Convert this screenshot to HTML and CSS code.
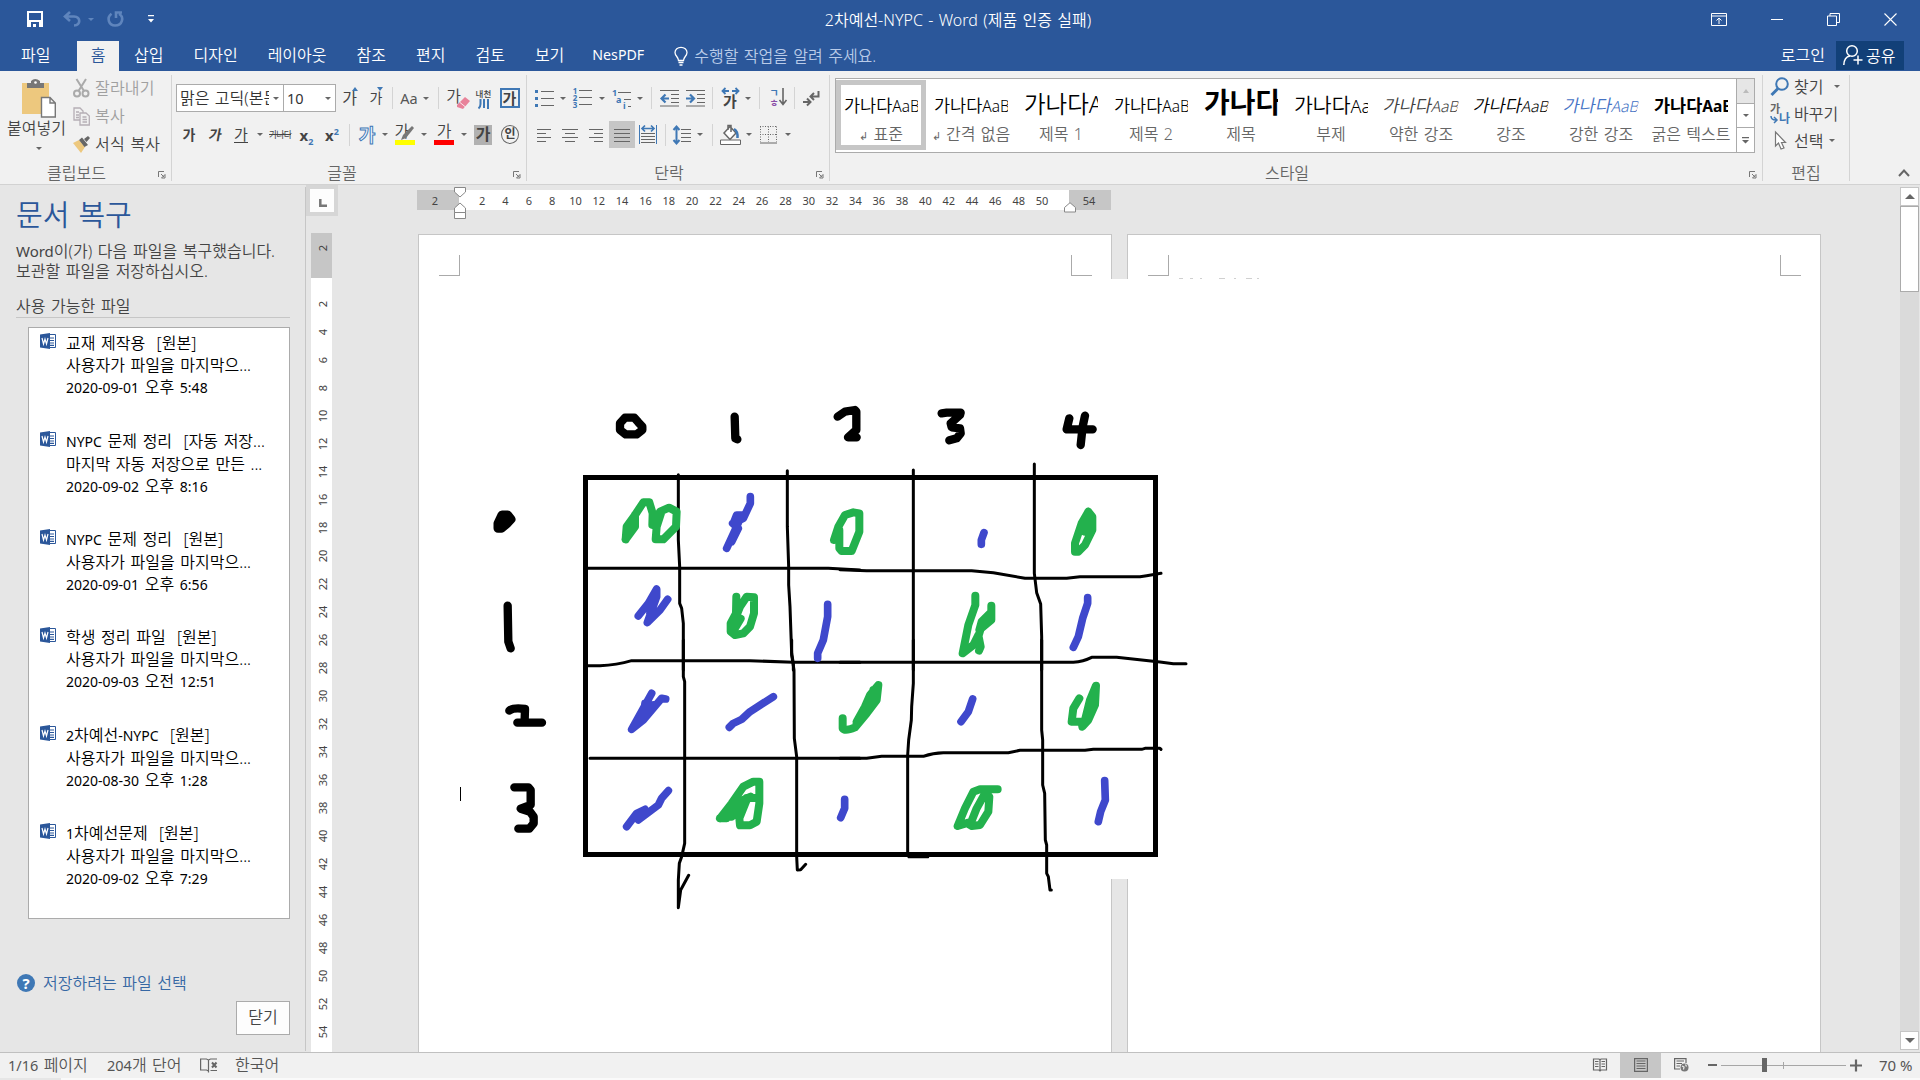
FILE: index.html
```
<!DOCTYPE html>
<html lang="ko">
<head>
<meta charset="utf-8">
<title>2차예선-NYPC - Word</title>
<link rel="stylesheet" href="styles.css">
</head>
<body>
<header class="titlebar">
  <div class="qat">
    <svg width="16" height="16" viewBox="0 0 16 16"><path fill="#fff" fill-rule="evenodd" d="M0 0H16V16H0ZM2 2V9H14V2ZM4 11V16H6V13H9V16H12V11Z"/></svg>
    <svg width="18" height="16" viewBox="0 0 18 16" fill="none" stroke="#5f85bd" stroke-width="2.6"><path d="M7 1L2 5.5L7 10M2 5.5H11C18 6 18 14 11 14.5"/></svg>
    <i class="ar faint"></i>
    <svg width="17" height="16" viewBox="0 0 17 16" fill="none" stroke="#5f85bd" stroke-width="2.6"><path d="M4.500 2.800C-1 7 2 14.500 8 14.500C15.500 14.500 17.500 6 12 2.800M9 7V1.500H15"/></svg>
    <svg class="cust" width="6" height="8" viewBox="0 0 6 8"><path fill="#fff" d="M0 0H6V1.300H0ZM0 4H6L3 7.500Z"/></svg>
  </div>
  <div class="doc-title">2차예선-NYPC - Word (제품 인증 실패)</div>
  <div class="winbtns">
    <svg width="16" height="13" viewBox="0 0 16 13" fill="none" stroke="#fff"><path d="M.5.5H15.500V12.500H.5ZM.5 3H15.500M8 11V5M5.500 7.500L8 5L10.500 7.500"/></svg>
    <svg width="12" height="13" viewBox="0 0 12 13" stroke="#fff"><path d="M0 6.500H12"/></svg>
    <svg width="13" height="13" viewBox="0 0 13 13" fill="none" stroke="#fff"><path d="M.5 3H9.500V12.500H.5ZM3 3V.5H12.500V9.500H9.500"/></svg>
    <svg width="13" height="13" viewBox="0 0 13 13" stroke="#fff" stroke-width="1.1"><path d="M.5.5L12.500 12.500M12.500.5L.5 12.500"/></svg>
  </div>
</header>
<nav class="tabs">
  <span class="file">파일</span><span class="on">홈</span><span>삽입</span><span>디자인</span><span>레이아웃</span><span>참조</span><span>편지</span><span>검토</span><span>보기</span><span class="nes">NesPDF</span>
  <div class="tell">
    <svg width="14" height="19" viewBox="0 0 14 19" fill="none" stroke="#fff" stroke-width="1.300"><path d="M4.500 13.500C4.500 10 1 9 1 5.500A5.800 5 0 0 1 13 5.500C13 9 9.500 10 9.500 13.500ZM4.500 15.500H9.500M5.500 18H8.500"/></svg>
    <em>수행할 작업을 알려 주세요.</em>
  </div>
  <b class="login">로그인</b>
  <div class="share">
    <svg width="20" height="20" viewBox="0 0 20 20" fill="none" stroke="#fff" stroke-width="1.500"><circle cx="9" cy="6" r="5.300"/><path d="M.8 20C1 14 4 11.500 7 11M15 10.500V19.500M10.500 15H19.500"/></svg>
    <em>공유</em>
  </div>
</nav>

<section class="ribbon">
  <div class="group clip">
    <div class="clip-body">
      <div class="paste">
        <svg width="34" height="39" viewBox="0 0 34 39"><path fill="#edc87e" d="M0 4H27V35H0Z"/><path fill="#777" d="M5 4H9V2Q13-2 18 2V4H22V9H5Z"/><circle cx="13.500" cy="3.500" r="1.300" fill="#fff"/><path fill="#fff" stroke="#777" stroke-width="1.400" d="M19.500 18.500H28L33.300 24V38H19.500ZM28 18.500V24H33.300"/></svg>
        <span>붙여넣기</span>
        <i class="ar"></i>
      </div>
      <div class="clip-list">
        <div class="dis"><svg width="17" height="19" viewBox="0 0 17 19" fill="none" stroke="#aaa" stroke-width="2"><path d="M3.500 0L11 12M13 0L5.500 12"/><circle cx="4" cy="14.500" r="3"/><circle cx="12.500" cy="14.500" r="3"/></svg>잘라내기</div>
        <div class="dis"><svg width="17" height="19" viewBox="0 0 17 19" fill="#f1f1f1" stroke="#b5aeb5" stroke-width="1.300"><path d="M1 1H7L10 4V13H1ZM3 5H6M3 8H6M3 10.500H6"/><path d="M7 6H13L16.300 9V18H7ZM9.500 10H13.500M9.500 12.500H14M9.500 15H14"/></svg>복사</div>
        <div><svg width="17" height="17" viewBox="0 0 17 17"><path fill="#edc87e" d="M0 7L6 4L12 11L8 17Z"/><path fill="#666" d="M6 4L9 1.500L15 9L11.500 11ZM11 3L15 0L17 2L13.500 6Z"/></svg>서식 복사</div>
      </div>
    </div>
    <div class="cap"><span>클립보드</span><svg class="launch" viewBox="0 0 8 8"><path d="M.5 6V.5H6M3 3L6 6M7 3.500V7H3.500Z"/></svg></div>
  </div>

  <div class="group fontg">
    <div class="row f1">
      <div class="combo"><span>맑은 고딕(본문</span><i class="ar"></i></div>
      <div class="combo num"><span>10</span><i class="ar"></i></div>
      <span class="grow">가<svg width="6" height="4"><path fill="#3f78b5" d="M0 4L3 0L6 4Z"/></svg></span>
      <span class="grow sm">가<svg width="6" height="4"><path fill="#3f78b5" d="M0 0L3 4L6 0Z"/></svg></span>
      <i class="sep"></i>
      <span class="aa">Aa<i class="ar"></i></span>
      <i class="sep"></i>
      <span class="clear">가<svg width="13" height="12" viewBox="0 0 13 12"><path fill="#e8829a" d="M8 0L13 4L6 12L0 10V8Z"/><path stroke="#fff" stroke-width=".8" d="M3 5.500L8.500 10"/></svg></span>
      <span class="ruby"><small>내천</small><svg width="11" height="10" fill="none" stroke="#3f78b5" stroke-width="2"><path d="M2.500 0V5Q2.500 8 .5 9.500M6 0V9M10 0V10"/></svg></span>
      <span class="boxed">가</span>
    </div>
    <div class="row f2">
      <span class="g bold">가</span><span class="g bold it">가</span><span class="g und">가</span><i class="ar"></i>
      <span class="strike">가나다</span>
      <span class="x">x<sub>2</sub></span><span class="x">x<sup>2</sup></span><i class="sep"></i>
      <span class="glow">가</span><i class="ar"></i>
      <span class="mark"><span>가</span><svg width="14" height="14" viewBox="0 0 14 14"><path fill="#777" d="M12 0L14 2L6 12L1 14L3 9Z"/></svg></span><i class="ar"></i>
      <span class="mark red"><span>가</span></span><i class="ar"></i>
      <span class="shaded">가</span><span class="circled">인</span>
    </div>
    <div class="cap"><span>글꼴</span><svg class="launch" viewBox="0 0 8 8"><path d="M.5 6V.5H6M3 3L6 6M7 3.500V7H3.500Z"/></svg></div>
  </div>

  <div class="group parag">
    <div class="row p1">
      <svg width="19" height="18" class="ln"><path d="M6 2.500H19M6 9.500H19M6 16.500H19"/><path class="bl" d="M0 2.500H3M0 9.500H3M0 16.500H3" stroke-width="3"/></svg><i class="ar"></i>
      <span class="nums"><small>1<br>2<br>3</small><svg width="13" height="18" class="ln"><path d="M0 2.500H13M0 9.500H13M0 16.500H13"/></svg></span><i class="ar"></i>
      <svg width="19" height="19" class="ln"><path d="M6 3.500H19M12 10.500H19M16 17.500H19"/><text x="0" y="7">1</text><text x="4" y="14">a</text><text x="11" y="20">i</text></svg><i class="ar"></i><i class="sep"></i>
      <svg width="19" height="18" class="ln"><path d="M0 1.500H19M11 5.500H19M11 9.500H19M11 13.500H19M0 17H19"/><path class="bl" stroke-width="2.200" d="M9 9.500H2M5.500 5.500L1.500 9.500L5.500 13.500"/></svg>
      <svg width="19" height="18" class="ln"><path d="M0 1.500H19M11 5.500H19M11 9.500H19M11 13.500H19M0 17H19"/><path class="bl" stroke-width="2.200" d="M0 9.500H7M4 5.500L8 9.500L4 13.500"/></svg><i class="sep"></i>
      <span class="asian"><svg width="19" height="8" class="ln"><path class="bl" stroke-width="1.800" d="M8 4H1M4.500 1L1.500 4L4.500 7M11 4H18M14.500 1L17.500 4L14.500 7"/></svg>가</span><i class="ar"></i><i class="sep"></i>
      <span class="sort"><small>ㄱ<br><u>ㅎ</u></small><svg width="8" height="18" class="ln"><path stroke-width="1.600" d="M4 0V16M.5 12L4 16.500L7.500 12"/></svg></span><i class="sep"></i>
      <svg width="17" height="15" class="ln"><path stroke-width="2" d="M15.500 0V5.500H8M11 2L7.500 5.500L11 9M0 11H7M4 7.500L7.500 11L4 14.500"/></svg>
    </div>
    <div class="row p2">
      <svg width="14" height="14" class="ln"><path d="M0 1.500H14M0 5.500H9M0 9.500H14M0 13.500H9"/></svg>
      <svg width="16" height="14" class="ln"><path d="M0 1.500H16M3 5.500H13M0 9.500H16M3 13.500H13"/></svg>
      <svg width="14" height="14" class="ln"><path d="M0 1.500H14M5 5.500H14M0 9.500H14M5 13.500H14"/></svg>
      <span class="sel"><svg width="16" height="14" class="ln"><path d="M0 1.500H16M0 5.500H16M0 9.500H16M0 13.500H16"/></svg></span>
      <svg width="18" height="19" class="ln"><path d="M2 8.500H16M2 11.500H16M2 14.500H16M2 17.500H16"/><path class="bl" d="M.5 0V19M17.500 0V19"/><path class="bl" stroke-width="1.700" d="M3 3.500H15M6 .5L3 3.500L6 6.500M12 .5L15 3.500L12 6.500"/></svg><i class="sep"></i>
      <svg width="18" height="20" class="ln"><path d="M8 4.500H18M8 8.500H18M8 12.500H18M8 16.500H18"/><path class="bl" stroke-width="2" d="M3.500 1V19M.5 5L3.500 1.500L6.500 5M.5 15L3.500 18.500L6.500 15"/></svg><i class="ar"></i><i class="sep"></i>
      <svg width="21" height="21" class="ln"><path d="M4 9L10 2.500L16 9L10 15.500ZM8 6V1.500H11V8" fill="#fff" stroke-width="1.500"/><path class="bl" stroke-width="2.500" d="M14 5Q18 7 17.500 14"/><path fill="#fff" d="M.5 16H20.500V20.500H.5Z"/></svg><i class="ar"></i>
      <svg width="17" height="18" class="ln"><path stroke-dasharray="1 1.500" d="M.5.5V16M8.500.5V16M16.500.5V16M0 .5H17M0 8.500H17"/><path d="M0 17H17"/></svg><i class="ar"></i>
    </div>
    <div class="cap"><span>단락</span><svg class="launch" viewBox="0 0 8 8"><path d="M.5 6V.5H6M3 3L6 6M7 3.500V7H3.500Z"/></svg></div>
  </div>

  <div class="group styles">
    <div class="gallery">
      <div class="st on"><p>가나다<tt>AaB</tt></p><span><small>↲</small> 표준</span></div>
      <div class="st"><p>가나다<tt>AaB</tt></p><span><small>↲</small> 간격 없음</span></div>
      <div class="st"><p class="h1">가나다A</p><span>제목 1</span></div>
      <div class="st"><p>가나다<tt>AaB</tt></p><span>제목 2</span></div>
      <div class="st"><p class="ti">가나다</p><span>제목</span></div>
      <div class="st"><p class="su">가나다<tt>Aa</tt></p><span>부제</span></div>
      <div class="st"><p class="em gr">가나다<tt>AaB</tt></p><span>약한 강조</span></div>
      <div class="st"><p class="em">가나다<tt>AaB</tt></p><span>강조</span></div>
      <div class="st"><p class="em blu">가나다<tt>AaB</tt></p><span>강한 강조</span></div>
      <div class="st"><p class="bo">가나다<tt>AaB</tt></p><span>굵은 텍스트</span></div>
      <div class="gscroll"><div class="off"><i class="ar up"></i></div><div><i class="ar"></i></div><div><svg width="7" height="7"><path fill="#666" d="M0 0H7V1.200H0ZM0 3H7L3.500 6.500Z"/></svg></div></div>
    </div>
    <div class="cap"><span>스타일</span><svg class="launch" viewBox="0 0 8 8"><path d="M.5 6V.5H6M3 3L6 6M7 3.500V7H3.500Z"/></svg></div>
  </div>

  <div class="group edit">
    <div class="edit-list">
      <div><svg width="20" height="19" viewBox="0 0 20 19" fill="none" stroke="#3f78b5"><circle cx="12" cy="7" r="5.800" stroke-width="2"/><path stroke-width="3" d="M8 11.500L1.500 18"/></svg>찾기<i class="ar far"></i></div>
      <div><svg width="20" height="20" viewBox="0 0 20 20"><text x="0" y="9" class="t1">가</text><text x="9" y="19" class="t2">나</text><path fill="none" stroke="#3f78b5" stroke-width="1.500" d="M1 12Q1 16 6 16M4 13L7 16L4 19"/></svg>바꾸기</div>
      <div><svg width="20" height="19" viewBox="0 0 20 19"><path fill="#fff" stroke="#777" stroke-width="1.200" d="M5.500 1V15L8.500 12L11 18L14 17L11.500 11.500H15.500Z"/></svg>선택<i class="ar"></i></div>
    </div>
    <div class="cap"><span>편집</span></div>
  </div>
  <svg class="collapse" width="12" height="9" fill="none" stroke="#666" stroke-width="2"><path d="M1 8L6 2.500L11 8"/></svg>
</section>

<main class="main">
  <aside class="pane">
    <h1>문서 복구</h1>
    <p class="msg"><span class="lat">Word</span>이(가) 다음 파일을 복구했습니다.<br>보관할 파일을 저장하십시오.</p>
    <h2>사용 가능한 파일</h2>
    <ul class="files">
      <li><svg class="wd" viewBox="0 0 16 16"><path fill="#fff" stroke="#2b579a" d="M8 1.500H15.500V14.500H8Z"/><path stroke="#2b579a" stroke-width="1.200" d="M9 5H14M9 7.500H14M9 10H14M9 12.300H14"/><path fill="#2b579a" d="M0 1.500L10 0V16L0 14.500Z"/><path fill="none" stroke="#fff" stroke-width="1.200" d="M2 5L3.500 11L5 6L6.500 11L8 5"/></svg><div>교재 제작용 &nbsp;[원본]<br>사용자가 파일을 마지막으...<br><span class="lat">2020-09-01</span> 오후 <span class="lat">5:48</span></div></li>
      <li><svg class="wd" viewBox="0 0 16 16"><path fill="#fff" stroke="#2b579a" d="M8 1.500H15.500V14.500H8Z"/><path stroke="#2b579a" stroke-width="1.200" d="M9 5H14M9 7.500H14M9 10H14M9 12.300H14"/><path fill="#2b579a" d="M0 1.500L10 0V16L0 14.500Z"/><path fill="none" stroke="#fff" stroke-width="1.200" d="M2 5L3.500 11L5 6L6.500 11L8 5"/></svg><div><span class="lat">NYPC</span> 문제 정리 &nbsp;[자동 저장...<br>마지막 자동 저장으로 만든 ...<br><span class="lat">2020-09-02</span> 오후 <span class="lat">8:16</span></div></li>
      <li><svg class="wd" viewBox="0 0 16 16"><path fill="#fff" stroke="#2b579a" d="M8 1.500H15.500V14.500H8Z"/><path stroke="#2b579a" stroke-width="1.200" d="M9 5H14M9 7.500H14M9 10H14M9 12.300H14"/><path fill="#2b579a" d="M0 1.500L10 0V16L0 14.500Z"/><path fill="none" stroke="#fff" stroke-width="1.200" d="M2 5L3.500 11L5 6L6.500 11L8 5"/></svg><div><span class="lat">NYPC</span> 문제 정리 &nbsp;[원본]<br>사용자가 파일을 마지막으...<br><span class="lat">2020-09-01</span> 오후 <span class="lat">6:56</span></div></li>
      <li><svg class="wd" viewBox="0 0 16 16"><path fill="#fff" stroke="#2b579a" d="M8 1.500H15.500V14.500H8Z"/><path stroke="#2b579a" stroke-width="1.200" d="M9 5H14M9 7.500H14M9 10H14M9 12.300H14"/><path fill="#2b579a" d="M0 1.500L10 0V16L0 14.500Z"/><path fill="none" stroke="#fff" stroke-width="1.200" d="M2 5L3.500 11L5 6L6.500 11L8 5"/></svg><div>학생 정리 파일 &nbsp;[원본]<br>사용자가 파일을 마지막으...<br><span class="lat">2020-09-03</span> 오전 <span class="lat">12:51</span></div></li>
      <li><svg class="wd" viewBox="0 0 16 16"><path fill="#fff" stroke="#2b579a" d="M8 1.500H15.500V14.500H8Z"/><path stroke="#2b579a" stroke-width="1.200" d="M9 5H14M9 7.500H14M9 10H14M9 12.300H14"/><path fill="#2b579a" d="M0 1.500L10 0V16L0 14.500Z"/><path fill="none" stroke="#fff" stroke-width="1.200" d="M2 5L3.500 11L5 6L6.500 11L8 5"/></svg><div><span class="lat">2</span>차예선<span class="lat">-NYPC</span> &nbsp;[원본]<br>사용자가 파일을 마지막으...<br><span class="lat">2020-08-30</span> 오후 <span class="lat">1:28</span></div></li>
      <li><svg class="wd" viewBox="0 0 16 16"><path fill="#fff" stroke="#2b579a" d="M8 1.500H15.500V14.500H8Z"/><path stroke="#2b579a" stroke-width="1.200" d="M9 5H14M9 7.500H14M9 10H14M9 12.300H14"/><path fill="#2b579a" d="M0 1.500L10 0V16L0 14.500Z"/><path fill="none" stroke="#fff" stroke-width="1.200" d="M2 5L3.500 11L5 6L6.500 11L8 5"/></svg><div><span class="lat">1</span>차예선문제 &nbsp;[원본]<br>사용자가 파일을 마지막으...<br><span class="lat">2020-09-02</span> 오후 <span class="lat">7:29</span></div></li>
    </ul>
    <div class="help"><i>?</i>저장하려는 파일 선택</div>
    <button class="close">닫기</button>
  </aside>

  <div class="vcol">
    <div class="corner"><div><svg width="8" height="8" fill="none" stroke="#777" stroke-width="2.500"><path d="M1.300 0V6.700H8"/></svg></div></div>
    <div class="vruler"><div class="dark"><span>2</span></div>
      <div class="nums-v"><span>2</span><span>4</span><span>6</span><span>8</span><span>10</span><span>12</span><span>14</span><span>16</span><span>18</span><span>20</span><span>22</span><span>24</span><span>26</span><span>28</span><span>30</span><span>32</span><span>34</span><span>36</span><span>38</span><span>40</span><span>42</span><span>44</span><span>46</span><span>48</span><span>50</span><span>52</span><span>54</span></div>
    </div>
  </div>

  <div class="doc">
    <div class="hruler">
      <div class="dark a">2</div>
      <div class="nums-h"><span>2</span><span>4</span><span>6</span><span>8</span><span>10</span><span>12</span><span>14</span><span>16</span><span>18</span><span>20</span><span>22</span><span>24</span><span>26</span><span>28</span><span>30</span><span>32</span><span>34</span><span>36</span><span>38</span><span>40</span><span>42</span><span>44</span><span>46</span><span>48</span><span>50</span></div>
      <div class="dark b">54</div>
      <svg class="ind left" width="12" height="32" fill="#fff" stroke="#888"><path d="M.5.5H11.500V5L6 10L.5 5ZM.5 25.500V21L6 16L11.500 21V25.500ZM.5 25.500H11.500V31.500H.5Z"/></svg>
      <svg class="ind right" width="12" height="11" fill="#fff" stroke="#888"><path d="M.5 10V5.500L6 .7L11.500 5.500V10Z"/></svg>
    </div>
    <div class="pages">
      <article class="page"><i class="cm l"></i><i class="cm r"></i></article>
      <article class="page"><i class="cm l"></i><i class="cm r"></i></article>
      <svg class="drawing" width="782" height="601" viewBox="460 279 782 601" fill="none" stroke-linecap="round" stroke-linejoin="round">
        <path fill="#fff" d="M1100 279H1242V879H1100Z"/>
        <path stroke="#d0d0d0" stroke-linecap="butt" d="M1179 278.500H1183M1190 278.500H1193M1200 278.500H1202M1219 278.500H1225M1234 278.500H1236M1246 278.500H1252M1257 278.500H1259"/>
        <path stroke="#000" stroke-width="5" stroke-linejoin="miter" d="M585.500 477.500H1155.500V854.500H585.500Z"/>
        <path stroke="#000" d="M460.500 787V801" stroke-linecap="butt"/>
        <g transform="translate(460 380) scale(.33333)">
          <path stroke="#000" stroke-width="9" d="M655 284V480L659 560V670L665 685L670 730V870M982 272V440L986 560V615L990 680L995 820L1000 850V870M380 565H1105L1200 570M380 857H420Q470 855 515 842H870L1000 847H1200"/>
          <path stroke="#000" stroke-width="25" d="M495 113H523L535 127L547 140V150L530 163H497L480 150V130ZM824 110L826 175L832 178M143 677L145 785L152 805"/>
          <path stroke="#000" stroke-width="27" d="M126 405H143L153 418L142 430L124 445H114V430Z"/>
          <path stroke="#23b14d" stroke-width="24" d="M497 478L500 440L525 405L550 367H568L578 400L577 435L600 395L627 383L650 395L648 440L610 478H587L590 440L603 400M497 478L525 440V405M505 440L515 450M829 650L828 700L812 730V755L825 765L850 760L870 740L882 700V652L860 650L840 680L828 710L842 716L825 745"/>
          <path stroke="#3f48cc" stroke-width="23" d="M871 350V370L850 415L820 430L830 405L845 405L830 440L800 505M818 430L835 445L815 485M535 708L565 670L590 627V650L562 728L600 690L623 658M580 670L570 700M1103 673V710L1090 780L1073 820V835"/>
        </g>
        <g transform="translate(840 380) scale(.33333)">
          <path stroke="#000" stroke-width="9" d="M220 270V870M583 252V580L590 638L602 672L605 770V870M0 569L80 572H395L460 578L555 595H680L720 590H900L920 587L963 580M0 847H700Q730 845 755 832H830L960 846L1000 851H1038"/>
          <path stroke="#000" stroke-width="25" d="M-7 110L15 95L45 90L49 95V150L24 172H50M305 100L320 98H362L360 105L332 130L335 142L360 145L362 160L350 175L328 181M688 115L680 148H758M735 107L728 140L722 195"/>
          <path stroke="#23b14d" stroke-width="24" d="M-18 480L-5 440L15 405L40 397L58 400V455L35 513H5L-2 505V450M-8 450V475M745 395L757 410V450L735 495L715 515H705V490L725 430L745 395M745 400L738 455L750 440M735 430V455M406 647V675L385 735L368 820L400 795L415 765L422 800L417 812M454 677V720L418 750L425 725L450 700M424 740L415 770M430 725H445"/>
          <path stroke="#3f48cc" stroke-width="23" d="M432 458L424 480V493M743 653V670L728 715L715 770L700 802"/>
        </g>
        <g transform="translate(460 640) scale(.33333)">
          <path stroke="#000" stroke-width="9" d="M670 0V110L674 125V610L665 650L658 670L655 720V803L662 750L686 706M995 0V45L1002 90L1003 295L1010 350V650L1012 690L1022 689L1037 673M390 355H1200"/>
          <path stroke="#000" stroke-width="25" d="M148 212Q160 202 195 207L194 240M172 248H246M163 442H205L212 450V495L182 506L210 515L221 530V550L208 566H175"/>
          <path stroke="#23b14d" stroke-width="24" d="M780 535L815 490L850 440L880 425L898 425V490L890 545L870 556H840L838 535L860 480L872 470L850 480L815 505L800 535L780 535M850 500L815 530H795M860 474H885"/>
          <path stroke="#3f48cc" stroke-width="23" d="M575 160L515 268L550 240L605 175L617 177M565 190L530 250M555 190L550 225L580 195M808 262L820 250L845 238L870 215L940 170M500 560L530 520L555 508L535 540L595 495L605 475L625 452M525 530L545 528M1154 478V505L1142 533"/>
        </g>
        <g transform="translate(840 640) scale(.33333)">
          <path stroke="#000" stroke-width="9" d="M220 0V130L215 200L214 240L206 300L203 345V645M605 0V270L608 300V435L614 460L616 600L620 615V700L625 710L630 750H634M0 355H80L125 349H250Q280 338 310 338H505L540 331H735L760 328H905L915 325H960L963 328"/>
          <path stroke="#000" stroke-width="5" d="M205 652H265"/>
          <path stroke="#23b14d" stroke-width="24" d="M8 235V265Q15 275 45 262L80 220L110 180L115 135L90 165L75 200L50 245M100 150L95 200L75 215M65 225L50 250M90 175L80 210M718 175L700 205L695 245H725L727 260L745 240L765 195L768 137L750 180L735 240M765 150L755 210M473 448H420L400 455L375 505L353 558L385 548L395 558L420 555L445 515L448 470L435 460L410 505L390 555"/>
          <path stroke="#3f48cc" stroke-width="23" d="M398 177L385 215L363 245M794 422L796 480L782 515L775 545"/>
        </g>
      </svg>
    </div>
  </div>

  <div class="vscroll"><div class="sb"><i class="ar up"></i></div><div class="thumb"></div><div class="sb down"><i class="ar"></i></div></div>
</main>

<footer class="status">
  <span class="s1"><span class="lat">1/16</span> 페이지</span><span class="s2"><span class="lat">204</span>개 단어</span>
  <svg class="book" width="18" height="15" fill="none" stroke="#666" stroke-width="1.200"><path d="M8.500 13L6.500 12H.6V1H6.500L8.500 2V14.500M8.500 2L10.500 1H17M10.500 12.500H17" /><path stroke-width="2" d="M12 4.500L16.500 9.500M16.500 4.500L12 9.500"/></svg>
  <span class="s3">한국어</span>
  <div class="views">
    <svg width="14" height="14" fill="none" stroke="#666" stroke-width="1.200"><path d="M.5 1H6L7 2L8 1H13.500V12H8L7 13L6 12H.5ZM7 2V13M2 3.500H5.500M2 6H5.500M2 8.500H5.500M8.500 3.500H12M8.500 6H12M8.500 8.500H12"/></svg>
    <span><svg width="14" height="14" fill="none" stroke="#666" stroke-width="1.200"><path d="M.6.6H13.400V13.400H.6ZM2.500 3H11.500M2.500 5.500H11.500M2.500 8H11.500M2.500 10.500H11.500"/></svg></span>
    <svg width="15" height="14" fill="none" stroke="#666" stroke-width="1.200"><path d="M12 5V.6H.6V11H6M2.500 3H10M2.500 5.500H8M2.500 8H6"/><circle cx="10.500" cy="9.500" r="4" fill="#777" stroke="none"/><path stroke="#f1f1f1" d="M8 8L10 9L9.500 11.500M11.500 6.500L12.500 8.500"/></svg>
  </div>
  <svg class="zoom" width="156" height="16" stroke="#a6a6a6"><path d="M15 8.500H140M77.500 5V12"/><path stroke="#666" stroke-width="2.200" d="M2 8H11M144 8.500H156M150 2.500V14.500"/><path fill="#666" stroke="none" d="M56 1H61V15H56Z"/></svg>
  <span class="pct">70 %</span>
</footer>
<div class="taskedge"></div>
</body>
</html>
```
FILE: styles.css
```
* { box-sizing: border-box; margin: 0; padding: 0; }
body {
  width: 1920px; height: 1080px; overflow: hidden;
  display: flex; flex-direction: column;
  background: #e6e6e6; color: #444;
  font: 350 16px/20px "Noto Sans", "Noto Sans CJK KR", sans-serif;
  white-space: nowrap; word-spacing: 1.2px;
}
i, em, b { font-style: normal; font-weight: inherit; }
svg { display: block; flex: none; overflow: visible; }
.lat { font-size: 14px; font-weight: 400; }

.ar { display: block; flex: none; width: 0; height: 0; border: 3.5px solid transparent; border-top-color: #666; border-bottom: 0; }
.ar.up { border-top: 0; border-bottom: 4px solid #666; }
.ar.faint { border-top-color: #5f85bd; }

/* title bar */
.titlebar { height: 41px; background: #2b579a; color: #fff; display: grid; grid-template-columns: 600px 716px 1fr; }
.qat { display: flex; align-items: center; padding-left: 27px; height: 38px; }
.qat svg:nth-child(2) { margin-left: 20px; }
.qat .ar { margin: 0 13px 0 7px; }
.qat .cust { margin-left: 24px; }
.doc-title { font-size: 16px; line-height: 40px; text-align: center; }
.winbtns { display: flex; align-items: center; height: 38px; justify-content: flex-end; padding-right: 23px; gap: 44px; }

/* tabs */
.tabs { height: 30px; background: #2b579a; color: #fff; display: flex; line-height: 28px; }
.tabs > span { padding: 0 15px; }
.tabs .file { width: 77px; padding-left: 21px; }
.tabs .on { width: 42px; padding: 0; text-align: center; background: #f1f1f1; color: #2b579a; }
.tabs .nes { font-size: 14.2px; font-weight: 400; width: 82px; padding-left: 13px; }
.tell { display: flex; padding: 6px 0 0 13px; line-height: 18px; }
.tell em { color: #b9cbe8; margin-left: 6px; }
.login { margin-left: auto; padding-right: 11px; }
.share { width: 68px; height: 29px; margin-right: 16px; background: #124078; display: flex; padding: 4px 0 0 7px; }
.share em { margin-left: 3px; line-height: 22px; }

/* ribbon */
.ribbon { height: 114px; background: #f1f1f1; border-bottom: 1px solid #d2d2d2; display: flex; }
.group { margin-top: 4px; height: 106px; border-right: 1px solid #d4d4d4; display: flex; flex-direction: column; }
.cap { margin-top: auto; height: 16px; display: flex; align-items: center; color: #666; font-size: 16px; line-height: 15px; }
.cap span { flex: 1; text-align: center; }
.launch { width: 8px; height: 8px; margin: 3px 5px 0; fill: none; stroke: #777; }
.sep { justify-self: center; width: 1px; height: 22px; background: #d4d4d4; }
.row { display: grid; align-items: center; justify-items: center; }

.clip { width: 172px; }
.clip-body { display: flex; }
.paste { width: 73px; padding: 4px 0 0 0; display: flex; flex-direction: column; align-items: center; }
.paste svg { margin-left: 5px; }
.paste .ar { margin: 9px 0 0 5px; }
.clip-list { margin-top: -1px; }
.clip-list div { display: flex; align-items: center; height: 28px; gap: 5px; letter-spacing: .2px; }
.clip-list .dis { color: #a0a0a0; }

.fontg { width: 355px; padding: 9px 0 0 4px; }
.f1 { height: 28px; grid-template-columns: 108px 52px 27px 26px 6px 39px 8px 29px 25px 27px; }
.f2 { height: 27px; margin-top: 9px; margin-bottom: 1px; grid-template-columns: 26px 26px 26px 12px 28px 25px 26px 9px 26px 10px 29px 10px 30px 10px 28px 26px; }
.combo { width: 100%; height: 28px; border: 1px solid #ababab; background: #fff; display: flex; align-items: center; padding: 0 4px 0 3px; color: #333; }
.combo.num { border-left: 0; font-size: 14.5px; font-weight: 400; }
.combo span { flex: 1; overflow: hidden; margin-right: 4px; }
.grow { position: relative; font-size: 16px; font-weight: 400; }
.grow.sm { font-size: 14px; }
.grow svg { position: absolute; right: -1px; top: -1px; }
.aa { display: flex; align-items: center; gap: 5px; font-size: 14.5px; font-weight: 400; color: #555; }
.clear { position: relative; padding-right: 6px; line-height: 18px; top: -2px; }
.clear svg { position: absolute; right: -3px; top: 10px; }
.ruby { display: flex; flex-direction: column; align-items: center; }
.ruby small { font-size: 8.5px; line-height: 11px; font-weight: 500; letter-spacing: .3px; }
.boxed { width: 20px; height: 20px; border: 2px solid #3f78b5; font-size: 15px; line-height: 16px; text-align: center; font-weight: bold; }
.g { font-size: 14px; font-weight: 400; }
.bold { font-weight: bold; }
.it { transform: skewX(-10deg); }
.und { border-bottom: 1px solid #444; line-height: 16px; font-size: 15px; }
.strike { font-size: 9px; line-height: 12px; text-decoration: line-through; letter-spacing: -1px; font-weight: 400; }
.x { font-size: 15px; font-weight: bold; line-height: 16px; }
.x sub, .x sup { font-size: 9px; color: #3f78b5; line-height: 0; }
.glow { color: #f4f9ff; font-weight: bold; font-size: 18px; -webkit-text-stroke: 1px #3f78b5; }
.mark { position: relative; width: 20px; height: 21px; border-bottom: 5px solid #ff0; line-height: 15px; }
.mark.red { border-color: #f00; text-align: center; }
.mark svg { position: absolute; left: 5px; top: 2px; }
.shaded { width: 18px; height: 20px; background: #b1b1b1; line-height: 19px; text-align: center; font-weight: bold; }
.circled { width: 18px; height: 19px; border: 1px solid #666; border-radius: 50%; font-size: 12px; line-height: 16px; text-align: center; font-weight: bold; }

.parag { width: 303px; padding: 9px 0 0 4px; }
.parag .cap span { margin-left: -4px; }
.p1 { height: 28px; grid-template-columns: 26px 12px 27px 12px 27px 10px 12px 25px 26px 9px 26px 9px 14px 24px 9px 24px; }
.p2 { height: 27px; margin-top: 9px; margin-bottom: 1px; grid-template-columns: 26px 26px 26px 26px 26px 9px 24px 12px 13px 23px 14px 25px 14px; }
.ln { fill: none; stroke: #666; }
.ln .bl { stroke: #3f78b5; }
.ln text { fill: #3f78b5; stroke: none; font-size: 9px; font-weight: bold; }
.nums { display: flex; gap: 2px; }
.nums small { font-size: 8px; line-height: 7px; color: #3f78b5; font-weight: bold; margin-top: -1px; }
.asian { display: flex; flex-direction: column; align-items: center; font-size: 15px; line-height: 12px; font-weight: bold; margin-top: -2px; }
.sort { display: flex; }
.sort small { font-size: 10px; line-height: 10px; font-weight: bold; color: #3f78b5; }
.sort u { text-decoration: none; color: #8a4fa8; }
.sel { width: 26px; height: 27px; background: #c6c6c6; display: grid; place-items: center; }

.styles { width: 933px; padding-top: 3px; }
.gallery { margin-left: 5px; width: 920px; height: 75px; border: 1px solid #ababab; background: #fff; display: flex; }
.st { width: 90px; height: 70px; margin-top: 1px; border: 5px solid transparent; color: #666; text-align: center; font-size: 16px; }
.st.on { border-color: #c6c6c6; }
.st p { height: 34px; line-height: 34px; margin: 3px 3px 0 3px; overflow: hidden; text-align: left; color: #000; font-size: 17.5px; }
.st tt { font: inherit; font-size: 15.5px; }
.st span { display: block; line-height: 18px; margin: 3px -5px 0; }
.st small { font-size: 11px; }
.st .h1 { font-size: 23.5px; line-height: 32px; }
.st .ti { font-size: 28px; font-weight: bold; line-height: 28px; }
.st .su { font-size: 20.5px; }
.st .su tt { font-size: 18px; }
.st .em { transform: skewX(-12deg); }
.st .gr { color: #404040; }
.st .blu { color: #4472c4; }
.st .bo { font-weight: bold; }
.gscroll { width: 18px; margin-left: auto; border-left: 1px solid #ababab; display: flex; flex-direction: column; }
.gscroll div { flex: 1; display: grid; place-items: center; border-bottom: 1px solid #ababab; }
.gscroll div:last-child { border: 0; }
.gscroll .off { background: #e6e6e6; }
.gscroll .off .ar { border-bottom-color: #bbb; }

.edit { width: 87px; }
.edit-list { padding: 0 0 0 7px; margin-top: -1px; }
.edit-list div { height: 27px; display: flex; align-items: center; gap: 4px; line-height: 20px; padding-bottom: 2px; }
.edit-list .ar { margin-left: 2px; }
.edit-list .ar.far { margin-left: 7px; }
.t1, .t2 { font-size: 11px; font-weight: bold; fill: #666; }
.t2 { fill: #3f78b5; font-size: 12px; }
.collapse { margin: 97px 0 0 48px; }

/* recovery pane */
.main { flex: 1; min-height: 0; display: flex; }
.pane { width: 306px; margin-top: 2px; height: 864px; border-right: 1px solid #c6c6c6; padding: 10px 15px 0 16px; display: flex; flex-direction: column; word-spacing: 1.5px; }
.pane h1 { font-size: 29px; line-height: 36px; font-weight: inherit; color: #2b579a; }
.pane .msg { margin-top: 9px; line-height: 19.5px; }
.pane .msg .lat { font-size: 15px; }
.pane h2 { font-size: 16px; font-weight: inherit; margin-top: 16px; height: 20px; border-bottom: 1px solid #c6c6c6; line-height: 19px; padding-bottom: 20px; }
.files { margin: 9px 0 0 12px; height: 592px; border: 1px solid #ababab; background: #fff; padding: 5px 0 0 11px; list-style: none; color: #000; }
.files li { height: 98px; display: flex; line-height: 22px; gap: 10px; }
.files li div { margin-top: -1px; }
.wd { width: 16px; height: 16px; }
.help { margin-top: 54px; height: 20px; display: flex; gap: 8px; color: #3668a4; line-height: 20px; }
.help i { width: 18px; height: 18px; margin: 1px 0 0 1px; border-radius: 50%; background: #3f78b5; color: #fff; font-weight: bold; font-size: 15px; line-height: 18px; text-align: center; }
.close { align-self: flex-end; margin-top: 8px; width: 54px; height: 34px; border: 1px solid #ababab; background: #fdfdfd; color: #444; font: inherit; line-height: 30px; padding-bottom: 2px; }

/* rulers and pages */
.vcol { width: 32px; display: flex; flex-direction: column; }
.corner { width: 32px; height: 31px; background: #d6d6d6; padding: 4px; }
.corner div { width: 24px; height: 23px; background: #fdfdfd; display: grid; place-items: center; padding: 5px 0 0 1px; }
.vruler { margin: 17px 0 0 5px; width: 21px; flex: 1; background: #fff; font-size: 11px; font-weight: 400; }
.vruler span { display: grid; place-items: center; height: 28px; width: 22px; transform: rotate(-90deg) translateY(1px); }
.dark { background: #c6c6c6; }
.vruler .dark { height: 45px; padding-top: 1px; }
.nums-v { padding-top: 12px; }
.doc { width: 1562px; padding: 5px 0 0 79px; overflow: hidden; }
.hruler { position: relative; width: 694px; height: 20px; display: flex; background: #fff; font-size: 11px; font-weight: 400; line-height: 22px; text-align: center; }
.hruler .a { width: 42px; padding-right: 6px; }
.hruler .b { width: 42px; margin-left: auto; padding-right: 2px; }
.nums-h { display: flex; margin-left: 11.5px; }
.nums-h span { width: 23.33px; }
.ind { position: absolute; }
.ind.left { left: 37px; top: -3px; }
.ind.right { left: 647px; top: 12px; }
.pages { position: relative; display: flex; gap: 15px; margin: 24px 0 0 1px; }
.page { width: 694px; height: 830px; background: #fff; border: 1px solid #c6c6c6; display: flex; justify-content: space-between; padding: 20px 19px 0 20px; }
.cm { width: 21px; height: 21px; border-bottom: 1px solid #aaa; }
.cm.l { border-right: 1px solid #aaa; }
.cm.r { border-left: 1px solid #aaa; }
.drawing { position: absolute; left: 42px; top: 45px; }

.vscroll { width: 19px; margin-top: 2px; height: 863px; background: #dadada; display: flex; flex-direction: column; }
.sb { height: 19px; border: 1px solid #c6c6c6; background: #fff; display: grid; place-items: center; }
.sb .ar { border-left-width: 5px; border-right-width: 5px; border-top-width: 5px; }
.sb .ar.up { border-top-width: 0; border-bottom-width: 5px; }
.thumb { height: 86px; border: 1px solid #ababab; background: #fff; }
.down { margin-top: auto; }

/* status bar */
.status { height: 26px; border-top: 1px solid #c0c0c0; background: #f1f1f1; display: flex; align-items: center; color: #555; line-height: 18px; padding-bottom: 1px; }
.status .lat { font-size: 14.5px; }
.s1 { width: 107px; padding-left: 8px; }
.s2 { width: 93px; }
.s3 { margin-left: 17px; }
.views { margin-left: auto; display: flex; align-items: center; gap: 13px; }
.views span { width: 41px; height: 25px; background: #c6c6c6; display: grid; place-items: center; }
.zoom { margin-left: 17px; }
.pct { width: 58px; padding-left: 17px; font-size: 15px; font-weight: 400; word-spacing: 0; }
.taskedge { height: 2px; background: #fafafa; border-left: 61px solid #e6e6e6; }
```
